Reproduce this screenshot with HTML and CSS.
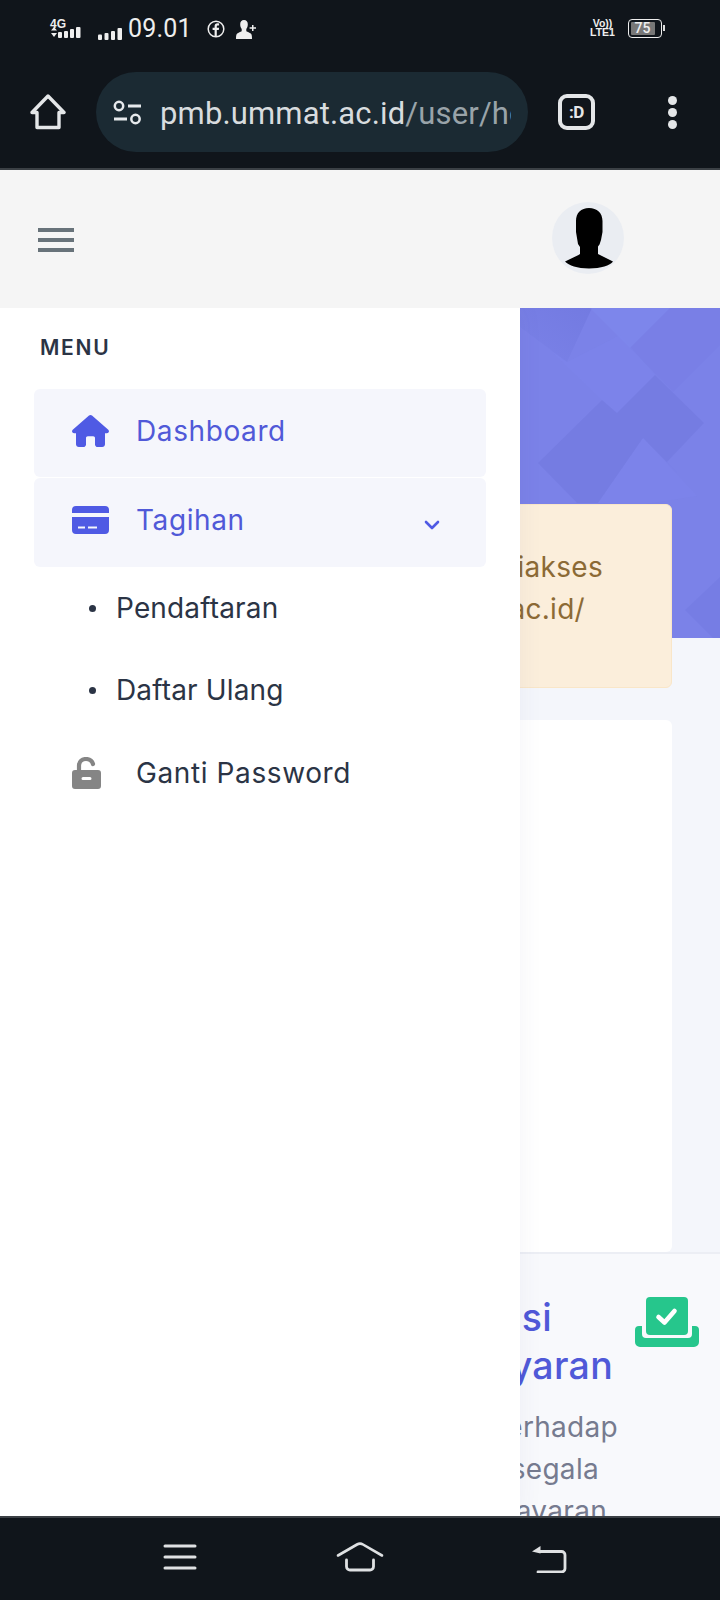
FILE: index.html
```html
<!DOCTYPE html>
<html lang="id">
<head>
<meta charset="utf-8">
<title>PMB UMMAT</title>
<link rel="stylesheet" href="styles.css">
</head>
<body>
<div class="phone">
  <div class="chrome">
    <div class="status">
      <div class="status-left">
        <div class="net">
          <span class="net-label">4G</span>
          <svg class="net-svg" width="32" height="20" viewBox="0 0 32 20"><path class="w" d="M1 10.500l3-3.500 3 3.500zM1 13h6l-3 4z"/><rect class="w" x="8" y="12" width="4" height="6" rx="1"/><rect class="w" x="14" y="11" width="4" height="7" rx="1"/><rect class="w" x="20" y="9" width="4" height="9" rx="1"/><rect class="w" x="26" y="7" width="4.500" height="11" rx="1"/></svg>
        </div>
        <svg class="sig" width="24" height="12" viewBox="0 0 24 12"><rect class="w" x="0" y="6.500" width="4" height="5.500" rx="1"/><rect class="w" x="6.500" y="5" width="4" height="7" rx="1"/><rect class="w" x="13" y="3" width="4" height="9" rx="1"/><rect class="w" x="19.500" y="0" width="4.500" height="12" rx="1"/></svg>
        <span class="clock">09.01</span>
        <svg class="fb" width="18" height="18" viewBox="0 0 18 18"><circle cx="9" cy="9" r="7.800" fill="none" stroke="#eee" stroke-width="1.500"/><path class="w" d="M9.800 16V10h2l.3-2.300H9.800V6.600c0-.8.3-1.200 1.200-1.200h1.100v-2c-.5-.1-1-.1-1.600-.1-1.900 0-2.900 1.100-2.900 3v1.400H5.600V10h2v6z"/></svg>
        <svg class="person" width="20" height="19" viewBox="0 0 20 19"><path class="w" d="M8 0c2.500 0 3.800 1.800 3.800 4.200 0 2-.6 3.600-1.500 4.700v2.300c1.300.9 3.300 1.300 4.500 2.300 1 .8 1.200 2.800 1.200 5.500H0c0-2.700.2-4.700 1.200-5.500 1.200-1 3.200-1.400 4.500-2.300V8.900C4.800 7.800 4.200 6.200 4.200 4.200 4.200 1.800 5.500 0 8 0zM16 5h1.500v2.300H20v1.400h-2.500V11H16V8.700h-2.400V7.300H16z"/></svg>
      </div>
      <div class="status-right">
        <div class="volte"><span>Vo))</span><span>LTE1</span></div>
        <div class="battery"><span class="battery-fill">75</span></div>
        <span class="battery-tip"></span>
      </div>
    </div>
    <div class="toolbar">
      <svg class="tb-home" width="36" height="36" viewBox="0 0 36 36"><path d="M18 2 L34 18.500 H29 V33.500 H7 V18.500 H2 Z" fill="none" stroke="#e4e6e8" stroke-width="3.400" stroke-linejoin="round"/></svg>
      <div class="pill">
        <svg class="tune" width="29" height="25" viewBox="0 0 29 25"><circle cx="6" cy="6" r="4.200" fill="none" stroke="#e6e9ec" stroke-width="2.500"/><path d="M15 6h13M1 19h13" stroke="#e6e9ec" stroke-width="2.800" fill="none"/><circle cx="22.500" cy="19" r="4.200" fill="none" stroke="#e6e9ec" stroke-width="2.500"/></svg>
        <div class="url"><span class="host">pmb.ummat.ac.id</span><span class="path">/user/ho</span></div>
      </div>
      <div class="tab-btn">:D</div>
      <div class="dots"><span></span><span></span><span></span></div>
    </div>
  </div>

  <div class="viewport">
    <header class="topbar">
      <div class="burger"><span></span><span></span><span></span></div>
      <div class="avatar">
        <svg width="72" height="72" viewBox="0 0 72 72"><path d="M37 6c8 0 13.500 5 13.500 13v11l-1.500 8-1.500 4.500-1.500 2V52l15 7.500c-3 3.800-12 7-24 7s-20-3.200-24-7l13.500-6.500 1.500-1v-7l-2-3-2-12V19c0-8 5-13 13-13z"/></svg>
      </div>
    </header>

    <section class="hero">
      <svg class="hero-art" width="720" height="330" viewBox="0 308 720 330" preserveAspectRatio="none">
        <defs>
          <linearGradient id="streak" x1="0" y1="0" x2="1" y2="1"><stop offset="0" stop-color="#5a62cf" stop-opacity=".3"/><stop offset="1" stop-color="#5a62cf" stop-opacity="0"/></linearGradient>
          <linearGradient id="corner" x1="1" y1="0" x2="0" y2="1"><stop offset="0" stop-color="#5e66cf" stop-opacity=".28"/><stop offset="1" stop-color="#5e66cf" stop-opacity=".02"/></linearGradient>
        </defs>
        <polygon points="520,308 592,308 567,362 520,327" fill="url(#corner)"/>
        <polygon points="590,308 630,348 670,308" fill="#838bf0" fill-opacity=".4"/>
        <polygon points="670,308 720,308 720,345 673,392 630,348" fill="#747ce2" fill-opacity=".3"/>
        <polygon points="550,350 602,400 617,413 655,375 620,335 567,362" fill="#7f87ee" fill-opacity=".3"/>
        <polygon points="538,463 602,400 617,413 655,375 704,423 667,462 643,438 598,503 577,503" fill="#6e76dc" fill-opacity=".45"/>
        <polygon points="643,438 697,493 667,462" fill="url(#streak)"/>
        <polygon points="643,438 697,496 640,505 598,503" fill="#7f87ee" fill-opacity=".25"/>
        <polygon points="685,610 720,577 720,638 713,638" fill="#6e76dc" fill-opacity=".35"/>
      </svg>
    </section>

    <main class="content">
      <div class="alert">
        <div class="alert-line">Halaman ini dapat diakses</div>
        <div class="alert-line alert-line-second">di pmb.ummat.ac.id/</div>
      </div>
      <div class="blank-card"></div>
    </main>

    <section class="stat">
      <div class="stat-text">
        <h2 class="stat-title"><span class="t1">Konfirmasi</span><span class="t2">Pembayaran</span></h2>
        <p class="stat-desc"><span class="d1">terhadap</span><span class="d2">segala</span><span class="d3">pembayaran</span></p>
      </div>
      <svg class="stat-icon" width="64" height="50" viewBox="0 0 64 50"><rect x="11" y="0" width="42" height="38" rx="4" fill="#26c68c"/><path d="M0 33a4 4 0 0 1 4-4h3v8a4 4 0 0 0 4 4h42a4 4 0 0 0 4-4v-8h3a4 4 0 0 1 4 4v12a5 5 0 0 1-5 5H5a5 5 0 0 1-5-5z" fill="#26c68c"/><path d="M23.500 20l6 5.500 10-11.500" fill="none" stroke="#fff" stroke-width="4.600" stroke-linecap="round" stroke-linejoin="round"/></svg>
    </section>

    <aside class="sidebar">
      <div class="menu-label">MENU</div>
      <a class="item active">
        <svg class="item-icon" width="37" height="32" viewBox="0 0 37 32"><path d="M18.500 0c.6 0 1.100.2 1.500.6l16 14c.7.7 1.100 1.400.9 2.200-.2.800-1 1.400-2 1.400H33v11c0 1.500-1.200 2.800-2.800 2.800h-4.600c-1.400 0-2.600-1.200-2.600-2.600v-6.400c0-1-.8-1.800-1.800-1.800h-5.400c-1 0-1.800.8-1.800 1.800v6.400c0 1.400-1.200 2.600-2.600 2.600H6.800C5.200 32 4 30.700 4 29.200v-11H2.100c-1 0-1.800-.6-2-1.400-.2-.8.2-1.500.9-2.200L17 .6c.4-.4.900-.6 1.500-.6z"/></svg>
        <span class="item-text">Dashboard</span>
      </a>
      <a class="item active item-sub-parent">
        <svg class="item-icon" width="37" height="28" viewBox="0 0 37 28"><path d="M4 0h29a4 4 0 0 1 4 4v3H0V4a4 4 0 0 1 4-4zM0 11h37v13a4 4 0 0 1-4 4H4a4 4 0 0 1-4-4zm6 9.500v2h7v-2zm10 0v2h9v-2z" fill-rule="evenodd"/></svg>
        <span class="item-text">Tagihan</span>
        <svg class="chevron" width="16" height="10" viewBox="0 0 16 10"><path d="M2 2l6 6 6-6" fill="none" stroke-width="2.600" stroke-linecap="round" stroke-linejoin="round"/></svg>
      </a>
      <a class="subitem"><span class="bullet"></span><span>Pendaftaran</span></a>
      <a class="subitem"><span class="bullet"></span><span>Daftar Ulang</span></a>
      <a class="item plain">
        <svg class="item-icon lock" width="29" height="32" viewBox="0 0 29 32"><path d="M7 14V8.500C7 4.400 10 2 14 2c3.300 0 6 1.800 7 5" fill="none" stroke="#858585" stroke-width="4.200" stroke-linecap="round"/><path d="M3 13h23a3 3 0 0 1 3 3v13a3 3 0 0 1-3 3H3a3 3 0 0 1-3-3V16a3 3 0 0 1 3-3zm8 7a1.500 1.500 0 0 0 0 3h7a1.500 1.500 0 0 0 0-3z" fill="#858585" fill-rule="evenodd"/></svg>
        <span class="item-text">Ganti Password</span>
      </a>
    </aside>
  </div>

  <nav class="navbar">
    <svg width="34" height="26" viewBox="0 0 34 26"><path d="M2 2h30M2 13h30M2 24h30" stroke="#dfe1e3" stroke-width="3" stroke-linecap="round" fill="none"/></svg>
    <svg width="48" height="31" viewBox="0 0 48 31"><path d="M2 14.500L21 3.500c2-1.200 4-1.200 6 0L46 14.500" stroke="#dfe1e3" stroke-width="2.600" stroke-linecap="round" fill="none"/><path d="M10.500 19v6.500a3.500 3.500 0 0 0 3.500 3.500h20a3.500 3.500 0 0 0 3.500-3.500V19" stroke="#dfe1e3" stroke-width="2.800" stroke-linecap="round" fill="none"/></svg>
    <svg width="36" height="28" viewBox="0 0 36 28"><path d="M9 6.500h21.500a3.500 3.500 0 0 1 3.500 3.500v13.500a3.500 3.500 0 0 1-3.500 3.500H7" stroke="#dfe1e3" stroke-width="2.800" stroke-linecap="round" fill="none"/><path d="M1 6.500L9.500 1v7.500z" fill="#dfe1e3"/></svg>
  </nav>
</div>
</body>
</html>
```
FILE: styles.css
```css
* { box-sizing: border-box; }
html, body { margin: 0; padding: 0; }
body { width: 720px; height: 1600px; overflow: hidden; background: #10151b; font-family: Inter, "Liberation Sans", sans-serif; }
.phone { width: 720px; height: 1600px; display: flex; flex-direction: column; }
.w { fill: #eeeeee; }

.chrome { height: 170px; flex: none; background: #10151b; border-bottom: 2px solid #3b4045; font-family: Roboto, sans-serif; color: #eee; }
.status { height: 58px; display: flex; justify-content: space-between; padding: 19px 55px 0 50px; }
.status-left { display: flex; align-items: flex-start; }
.net { width: 32px; height: 20px; position: relative; }
.net-label { position: absolute; left: 0; top: -1px; font: 700 12px/12px "Liberation Sans", sans-serif; }
.net-svg { position: absolute; left: 0; top: 1px; height: 20px; }
.sig { margin: 9px 0 0 16px; }
.clock { margin-left: 6px; font-size: 25px; line-height: 20px; font-weight: 400; height: 20px; letter-spacing: .2px; }
.fb { margin: 1px 0 0 15px; }
.person { margin: 1px 0 0 11px; }
.status-right { display: flex; align-items: flex-start; }
.volte { width: 25px; margin-right: 13px; display: flex; flex-direction: column; align-items: center; font: 700 10.500px/9px "Liberation Sans", sans-serif; }
.battery { width: 34px; height: 19px; border: 1.500px solid #eee; border-radius: 4px; padding: 1.500px; }
.battery-fill { display: block; width: 24px; height: 13px; background: #777; border-radius: 1px; font: 500 14px/13px Roboto, sans-serif; text-align: center; color: #eee; }
.battery-tip { width: 2px; height: 6px; margin: 6px 0 0 1px; background: #ddd; }

.toolbar { height: 110px; display: flex; align-items: flex-start; padding-top: 14px; }
.tb-home { margin: 22px 0 0 30px; flex: none; }
.pill { width: 432px; height: 80px; margin-left: 30px; background: #1b2a33; border-radius: 40px; display: flex; align-items: center; padding-left: 17px; flex: none; }
.tune { flex: none; }
.url { width: 351px; margin: 4px 0 0 18px; overflow: hidden; white-space: nowrap; font-size: 31px; line-height: 40px; letter-spacing: .15px; }
.host { color: #d8dcdf; }
.path { color: #99a3a9; }
.tab-btn { width: 37px; height: 36px; margin: 22px 0 0 30px; border: 4px solid #e4e6e8; border-radius: 9px; font: 700 17px/28px Roboto, sans-serif; letter-spacing: -.5px; text-align: center; color: #e4e6e8; flex: none; }
.dots { margin: 24px 0 0 73px; display: flex; flex-direction: column; gap: 3px; }
.dots span { width: 9px; height: 9px; border-radius: 50%; background: #e4e6e8; }

.viewport { position: relative; flex: 1; min-height: 0; overflow: hidden; background: #f4f6fb; }
.topbar { height: 138px; background: #f5f5f5; display: flex; align-items: flex-start; justify-content: space-between; padding: 32px 96px 0 38px; }
.burger { width: 36px; margin-top: 26px; display: flex; flex-direction: column; gap: 6px; }
.burger span { height: 4px; background: #68737a; }
.avatar { width: 72px; height: 72px; border-radius: 50%; background: #eaedf2; overflow: hidden; }
.avatar svg { display: block; fill: #000; }

.hero { position: relative; height: 330px; background: #7b82e8; overflow: hidden; }
.hero-art { position: absolute; left: 0; top: 0; }

.content { position: relative; margin-top: -134px; padding: 0 48px; }
.alert { height: 184px; background: #fbeedb; border: 1px solid #f9e6c8; border-radius: 6px; padding: 41px 68px 0 0; font-size: 28px; line-height: 42px; letter-spacing: .3px; color: #8c6a35; white-space: nowrap; }
.alert-line { text-align: right; }
.alert-line-second { padding-right: 18px; }
.blank-card { height: 532px; margin-top: 32px; background: #fff; border-radius: 6px; }

.stat { height: 262px; margin-top: 2px; background: #f8f9fc; display: flex; gap: 17px; padding-right: 21px; box-shadow: 0 -2px 0 #eceef4; }
.stat-text { flex: 1; min-width: 0; white-space: nowrap; }
.stat-title { margin: 40px 0 0; font-size: 37.500px; line-height: 48px; font-weight: 500; letter-spacing: .3px; color: #5059d8; }
.stat-title span, .stat-desc span { display: block; text-align: right; }
.t1 { padding-right: 66px; }
.t2 { padding-right: 5px; }
.stat-desc { margin: 16px 0 0; font-size: 28px; line-height: 42px; letter-spacing: .3px; color: #767b8f; }
.d2 { padding-right: 19px; }
.d3 { padding-right: 11px; }
.stat-icon { margin-top: 43px; flex: none; }

.sidebar { position: absolute; left: 0; top: 138px; bottom: 0; width: 520px; background: #fff; box-shadow: 0 0 24px rgba(60, 70, 120, .06); clip-path: inset(0 -40px 0 0); padding: 24px 34px 0; color: #2b3445; }
.menu-label { font-size: 21px; line-height: 32px; font-weight: 600; letter-spacing: 1.700px; margin: 0 0 25px 6px; }
.item { height: 88px; display: flex; align-items: center; padding: 0 46px 4px 38px; border-radius: 6px; font-size: 28px; letter-spacing: .6px; }
.item + .item { margin-top: 1px; }
.item-sub-parent { height: 89px; padding-bottom: 6px; }
.item.active { background: #f5f6fc; color: #5059d8; }
.item.active .item-icon { fill: #4f5ae4; }
.item-icon { flex: none; }
.item-text { margin-left: 27px; flex: 1; }
.chevron { flex: none; stroke: #4f5ae4; margin-top: 10px; }
.subitem { height: 82px; display: flex; align-items: center; padding-left: 55px; font-size: 28px; letter-spacing: .15px; }
.bullet { width: 7px; height: 7px; border-radius: 50%; background: #2b3445; margin-right: 20px; }
.item.plain { padding-right: 0; }
.item.plain .item-text { margin-left: 35px; }

.navbar { height: 84px; flex: none; background: #10151b; border-top: 2px solid #3b4045; display: flex; align-items: flex-start; }
.navbar svg { flex: none; margin-top: 26px; }
.navbar svg:nth-child(1) { margin-left: 163px; }
.navbar svg:nth-child(2) { margin-left: 139px; margin-top: 23px; }
.navbar svg:nth-child(3) { margin-left: 147px; margin-top: 27px; }
```
